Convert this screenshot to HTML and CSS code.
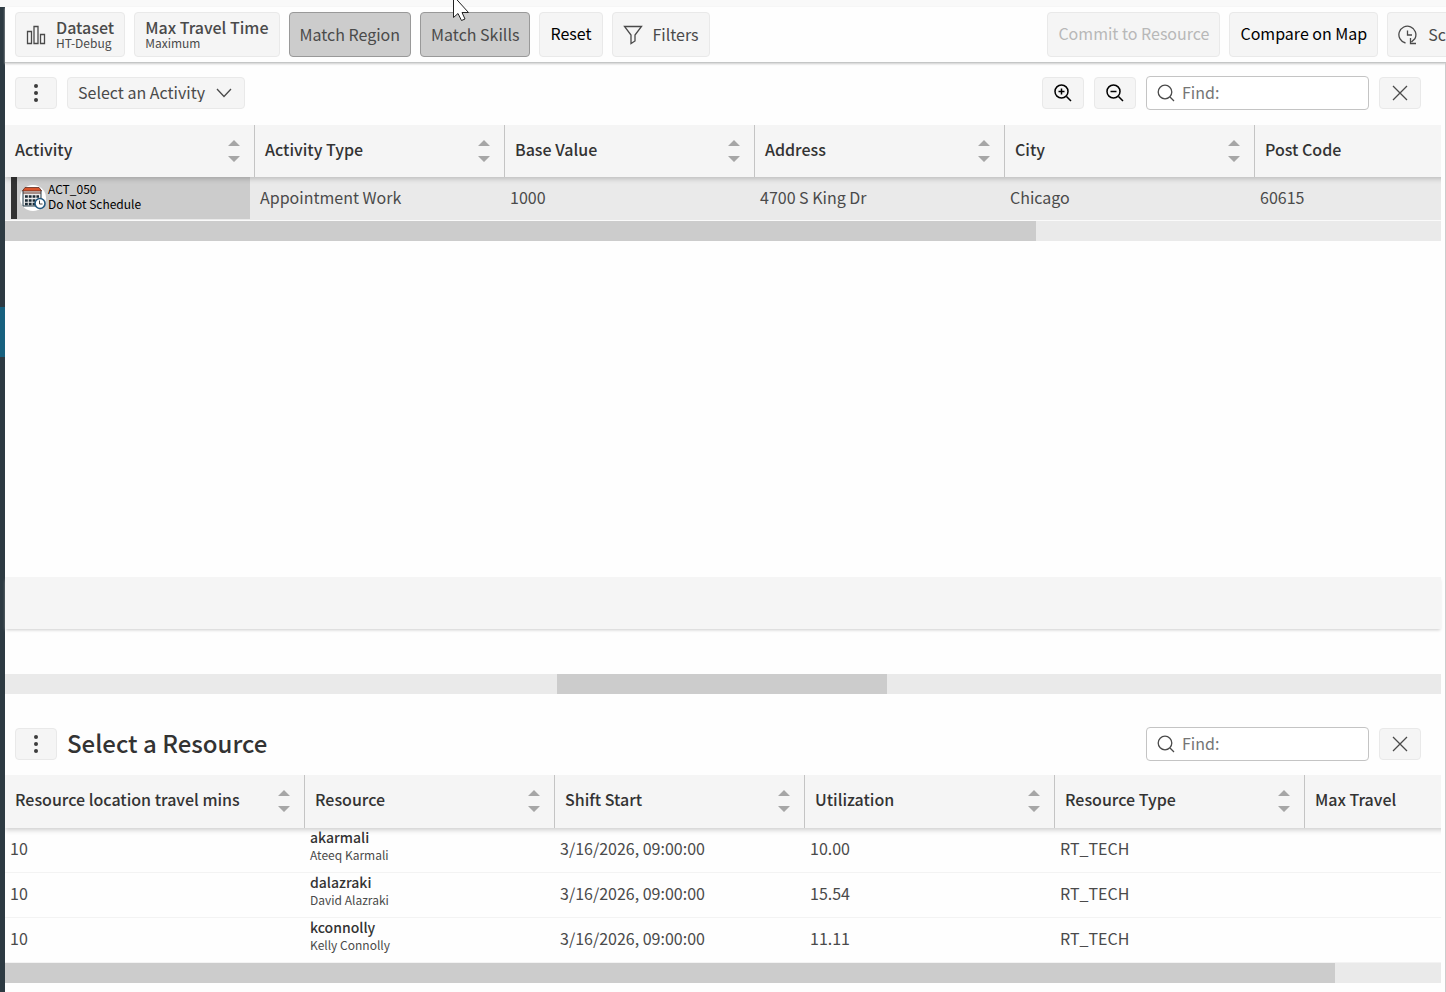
FILE: index.html
```
<!DOCTYPE html>
<html lang="en">

<head>
  <meta charset="UTF-8">
  <meta name="viewport" content="width=device-width, initial-scale=1.0">
  <title>Select an Activity</title>
  <link rel="stylesheet" href="styles.css">
</head>

<body>
  <div class="strip"></div>
  <div class="app">
    <div class="rail"><div class="rail-active"></div></div>
    <main class="main">
      <header class="toolbar">
        <button class="btn" type="button">
          <svg class="icon" width="20" height="20" viewBox="0 0 20 20"><path d="M1.5 6.500h4v12h-4zM8 1.500h4v17H8zM14.500 9.500h4v9h-4z" /></svg>
          <span class="stack"><b>Dataset</b><small>HT-Debug</small></span>
        </button>
        <button class="btn" type="button">
          <span class="stack"><b>Max Travel Time</b><small>Maximum</small></span>
        </button>
        <button class="btn pressed" type="button" aria-pressed="true">Match Region</button>
        <button class="btn pressed" type="button" aria-pressed="true">Match Skills</button>
        <button class="btn strong" type="button">Reset</button>
        <button class="btn" type="button">
          <svg class="icon" width="20" height="20" viewBox="0 0 20 20"><path d="M1.500 1.500h17L12 10v6l-4 2.500V10z" /></svg>
          Filters
        </button>
        <div class="spacer"></div>
        <button class="btn" type="button" disabled>Commit to Resource</button>
        <button class="btn strong" type="button">Compare on Map</button>
        <button class="btn btn-cut" type="button">
          <svg class="icon" width="20" height="20" viewBox="0 0 20 20"><path d="M7.500 18A8.500 8.500 0 1 1 17 13.500L13.500 17M9.500 5.500V10H14M12.500 13v5.500H18" /></svg>
          Sc
        </button>
      </header>

      <section class="panel panel-activity">
        <div class="bar">
          <button class="btn btn-sm" type="button" aria-label="Menu">
            <svg class="dots" width="20" height="20" viewBox="0 0 20 20"><circle cx="10" cy="3" r="2" /><circle cx="10" cy="10" r="2" /><circle cx="10" cy="17" r="2" /></svg>
          </button>
          <div class="select">
            <select aria-label="Activity">
              <option>Select an Activity</option>
            </select>
            <svg class="icon" width="16" height="16" viewBox="0 0 16 16"><path d="M1 4l7 7.500L15 4" /></svg>
          </div>
          <div class="spacer"></div>
          <button class="btn btn-sm strong" type="button" aria-label="Zoom in">
            <svg class="icon icon-bold" width="20" height="20" viewBox="0 0 20 20"><circle cx="8.500" cy="8.500" r="6.500" /><path d="M13.500 13.500l4.500 4.500M5.500 8.500h6M8.500 5.500v6" /></svg>
          </button>
          <button class="btn btn-sm strong" type="button" aria-label="Zoom out">
            <svg class="icon icon-bold" width="20" height="20" viewBox="0 0 20 20"><circle cx="8.500" cy="8.500" r="6.500" /><path d="M13.500 13.500l4.500 4.500M5.500 8.500h6" /></svg>
          </button>
          <label class="search">
            <svg class="icon" width="18" height="18" viewBox="0 0 18 18"><circle cx="8" cy="8" r="6.800" /><path d="M13 13l4 4" /></svg>
            <input type="text" placeholder="Find:" aria-label="Find activity">
          </label>
          <button class="btn btn-sm" type="button" aria-label="Close">
            <svg class="icon" width="16" height="16" viewBox="0 0 16 16"><path d="M1 1l14 14M15 1L1 15" /></svg>
          </button>
        </div>
        <div class="grid grid-fill">
          <table class="table-activity">
            <thead>
              <tr>
                <th><button type="button">Activity <svg class="sort" width="12" height="22" viewBox="0 0 12 22"><path d="M0 6l6-6 6 6zM0 16h12l-6 6z" /></svg></button></th>
                <th><button type="button">Activity Type <svg class="sort" width="12" height="22" viewBox="0 0 12 22"><path d="M0 6l6-6 6 6zM0 16h12l-6 6z" /></svg></button></th>
                <th><button type="button">Base Value <svg class="sort" width="12" height="22" viewBox="0 0 12 22"><path d="M0 6l6-6 6 6zM0 16h12l-6 6z" /></svg></button></th>
                <th><button type="button">Address <svg class="sort" width="12" height="22" viewBox="0 0 12 22"><path d="M0 6l6-6 6 6zM0 16h12l-6 6z" /></svg></button></th>
                <th><button type="button">City <svg class="sort" width="12" height="22" viewBox="0 0 12 22"><path d="M0 6l6-6 6 6zM0 16h12l-6 6z" /></svg></button></th>
                <th><button type="button">Post Code</button></th>
              </tr>
            </thead>
            <tbody>
              <tr>
                <td>
                  <div class="card">
                    <svg width="26" height="26" viewBox="0 0 26 26">
                      <circle cx="13" cy="13" r="13" fill="#fff" />
                      <path d="M3 5h18v16H3z" fill="#eee" stroke="#263e4d" />
                      <path d="M2.500 6L5 2.500h14L21.500 6z" fill="#d9542b" stroke="#5d2c20" stroke-width=".8" />
                      <path d="M3 8h18" stroke="#5d2c20" />
                      <path d="M5 11.500h14M5 15.500h14M5 19h11" stroke="#1c2b35" stroke-width="2.600" stroke-dasharray="2.800 1" />
                      <circle cx="20" cy="18.500" r="5" fill="#fff" stroke="#22587f" stroke-width="1.600" />
                      <path d="M19.500 15.500v3.500h3" fill="none" stroke="#444" />
                    </svg>
                    <span>ACT_050<br>Do Not Schedule</span>
                  </div>
                </td>
                <td>Appointment Work</td>
                <td>1000</td>
                <td>4700 S King Dr</td>
                <td>Chicago</td>
                <td>60615</td>
              </tr>
            </tbody>
          </table>
          <div class="track"><div class="thumb" style="width: 71.8%"></div></div>
        </div>
        <div class="footer-row"></div>
        <div class="track"><div class="thumb" style="width: 23%; margin-left: 38.45%"></div></div>
      </section>

      <section class="panel panel-resource">
        <div class="bar">
          <button class="btn btn-sm" type="button" aria-label="Menu">
            <svg class="dots" width="20" height="20" viewBox="0 0 20 20"><circle cx="10" cy="3" r="2" /><circle cx="10" cy="10" r="2" /><circle cx="10" cy="17" r="2" /></svg>
          </button>
          <h2>Select a Resource</h2>
          <div class="spacer"></div>
          <label class="search">
            <svg class="icon" width="18" height="18" viewBox="0 0 18 18"><circle cx="8" cy="8" r="6.800" /><path d="M13 13l4 4" /></svg>
            <input type="text" placeholder="Find:" aria-label="Find resource">
          </label>
          <button class="btn btn-sm" type="button" aria-label="Close">
            <svg class="icon" width="16" height="16" viewBox="0 0 16 16"><path d="M1 1l14 14M15 1L1 15" /></svg>
          </button>
        </div>
        <div class="grid">
          <table class="table-resource">
            <thead>
              <tr>
                <th class="wide"><button type="button">Resource location travel mins <svg class="sort" width="12" height="22" viewBox="0 0 12 22"><path d="M0 6l6-6 6 6zM0 16h12l-6 6z" /></svg></button></th>
                <th><button type="button">Resource <svg class="sort" width="12" height="22" viewBox="0 0 12 22"><path d="M0 6l6-6 6 6zM0 16h12l-6 6z" /></svg></button></th>
                <th><button type="button">Shift Start <svg class="sort" width="12" height="22" viewBox="0 0 12 22"><path d="M0 6l6-6 6 6zM0 16h12l-6 6z" /></svg></button></th>
                <th><button type="button">Utilization <svg class="sort" width="12" height="22" viewBox="0 0 12 22"><path d="M0 6l6-6 6 6zM0 16h12l-6 6z" /></svg></button></th>
                <th><button type="button">Resource Type <svg class="sort" width="12" height="22" viewBox="0 0 12 22"><path d="M0 6l6-6 6 6zM0 16h12l-6 6z" /></svg></button></th>
                <th><button type="button">Max Travel</button></th>
              </tr>
            </thead>
            <tbody>
              <tr>
                <td>10</td>
                <td><span class="person"><b>akarmali</b><small>Ateeq Karmali</small></span></td>
                <td>3/16/2026, 09:00:00</td>
                <td>10.00</td>
                <td>RT_TECH</td>
                <td></td>
              </tr>
              <tr>
                <td>10</td>
                <td><span class="person"><b>dalazraki</b><small>David Alazraki</small></span></td>
                <td>3/16/2026, 09:00:00</td>
                <td>15.54</td>
                <td>RT_TECH</td>
                <td></td>
              </tr>
              <tr>
                <td>10</td>
                <td><span class="person"><b>kconnolly</b><small>Kelly Connolly</small></span></td>
                <td>3/16/2026, 09:00:00</td>
                <td>11.11</td>
                <td>RT_TECH</td>
                <td></td>
              </tr>
            </tbody>
          </table>
          <div class="track"><div class="thumb" style="width: 92.6%"></div></div>
        </div>
      </section>
    </main>
  </div>
  <svg class="cursor" width="19" height="21" viewBox="0 0 19 21"><path d="M1.500-4v21.500l4.500-4 3.500 7 3.500-1.500-3-6.500h6.500z" /></svg>
</body>

</html>
```
FILE: styles.css
```
* {
  box-sizing: border-box;
}

body {
  display: flex;
  flex-direction: column;
  min-height: 100vh;
  margin: 0;
  overflow-x: hidden;
  background: #fefefe;
  color: #4a4a4a;
  font-family: "Noto Sans CJK SC", "Noto Sans", sans-serif;
  font-size: 16px;
  line-height: 20px;
}

button,
input,
select {
  font: inherit;
  color: inherit;
}

.strip {
  height: 7px;
  background: #f9f9f9;
}

.app {
  display: flex;
  flex: 1;
}

.rail {
  flex: none;
  width: 5px;
  padding-top: 300px;
  background: #2d3a42;
}

.rail-active {
  height: 50px;
  background: #17617f;
}

.main {
  display: flex;
  flex: 1;
  flex-direction: column;
  min-width: 0;
}

/* top toolbar */
.toolbar {
  display: flex;
  gap: 9px;
  padding: 5px 0 5px 10px;
  border-bottom: 1px solid #c4c6c6;
  box-shadow: 0 1px 2px #ccc;
  position: relative;
}

.btn {
  display: flex;
  flex: none;
  align-items: center;
  justify-content: center;
  gap: 10px;
  height: 45px;
  padding: 0 10px 2px;
  border: 1px solid #e9e9e9;
  border-radius: 4px;
  background: #f5f5f5;
  white-space: nowrap;
}

.toolbar .icon {
  margin-top: 2px;
}

.btn.pressed {
  background: #ccc;
  border-color: #999;
}

.btn.strong {
  color: #000;
}

.btn:disabled {
  color: #b8b8b8;
}

.toolbar .strong,
.toolbar .btn:disabled {
  padding-bottom: 4px;
}

.btn.btn-cut {
  padding-right: 0;
  border-right: 0;
  border-radius: 4px 0 0 4px;
}

.btn.btn-sm {
  width: 42px;
  height: 32px;
  padding: 0;
}

.stack,
.person {
  display: flex;
  flex-direction: column;
  text-align: left;
}

.stack b {
  font-weight: 500;
  line-height: 18px;
}

.stack small {
  font-size: 12px;
  line-height: 14px;
}

.spacer {
  flex: 1;
}

.icon {
  fill: none;
  stroke: currentColor;
  stroke-width: 1.3;
}

.icon-bold {
  stroke-width: 1.5;
}

.dots {
  fill: #3c3c3c;
}

/* panels */
.panel {
  border-right: 1px solid #ccc;
  padding-right: 4px;
}

.panel-activity {
  display: flex;
  flex: 1;
  flex-direction: column;
}

.panel-resource {
  padding-top: 19px;
  padding-bottom: 9px;
}

.bar {
  display: flex;
  align-items: center;
  gap: 10px;
  height: 62px;
  padding: 0 20px 0 10px;
}

.panel-activity .bar {
  padding-bottom: 2px;
}

.bar h2 {
  margin: 0;
  padding-bottom: 2px;
  color: #333;
  font-size: 24px;
  font-weight: 500;
  line-height: 32px;
}

.select {
  display: flex;
  align-items: center;
  gap: 10px;
  height: 32px;
  padding: 0 12px 0 10px;
  border: 1px solid #e9e9e9;
  border-radius: 4px;
  background: #f5f5f5;
}

.select select {
  appearance: none;
  padding: 0 0 2px;
  border: 0;
  background: none;
}

.search {
  display: flex;
  align-items: center;
  gap: 7px;
  width: 223px;
  height: 34px;
  padding: 0 10px;
  border: 1px solid #c4c4c4;
  border-radius: 4px;
  background: #fff;
}

.search input {
  flex: 1;
  min-width: 0;
  padding: 0 0 2px;
  border: 0;
  outline: 0;
  background: none;
}

.search input::placeholder {
  color: #757575;
}

/* tables */
.grid {
  overflow: hidden;
}

.grid-fill {
  flex: 1;
}

table {
  table-layout: fixed;
  border-collapse: separate;
  border-spacing: 0;
}

.table-activity {
  width: 1500px;
}

.table-resource {
  width: 1550px;
}

thead {
  position: relative;
  box-shadow: 0 2px 5px rgba(0, 0, 0, .2);
}

th {
  padding: 0;
  border-right: 1px solid #c4c4c4;
  background: #f5f5f5;
  color: #333;
  font-weight: 500;
}

th.wide {
  width: 300px;
}

th button {
  display: flex;
  align-items: center;
  justify-content: space-between;
  width: 100%;
  height: 53px;
  padding: 0 14px 5px 10px;
  border: 0;
  background: none;
}

.table-activity th button {
  height: 52px;
  padding-bottom: 4px;
}

.sort {
  margin-top: 4px;
  fill: #a6a6a6;
}

td {
  height: 45px;
  padding: 0 5px 4px;
  border-bottom: 1px solid #f3f3f3;
}

.table-activity td {
  height: 45px;
  border-bottom-color: #fafafa;
  background: #eaeaea;
}

.table-activity td:first-child {
  padding-bottom: 1px;
}

.card {
  display: flex;
  align-items: center;
  gap: 2px;
  height: 42px;
  margin-left: 1px;
  padding-left: 3px;
  border-left: 6px solid #333;
  background: #ccc;
  color: #000;
  font-size: 12px;
  line-height: 15px;
}

.card span {
  padding-bottom: 4px;
}

.person b {
  color: #333;
  font-size: 14px;
  font-weight: 500;
  line-height: 18px;
}

.person small {
  font-size: 12px;
  line-height: 18px;
}

.person {
  padding-bottom: 4px;
}

.table-activity td {
  height: 44px;
}

.track {
  flex: none;
  height: 20px;
  background: #eaeaea;
}

.thumb {
  height: 20px;
  background: #ccc;
}

.footer-row {
  height: 52px;
  margin-bottom: 45px;
  background: #f5f5f5;
  box-shadow: 0 2px 3px -1px #ccc;
}

.cursor {
  position: absolute;
  top: 0;
  left: 452px;
  fill: #fff;
  stroke: #222;
}
```
